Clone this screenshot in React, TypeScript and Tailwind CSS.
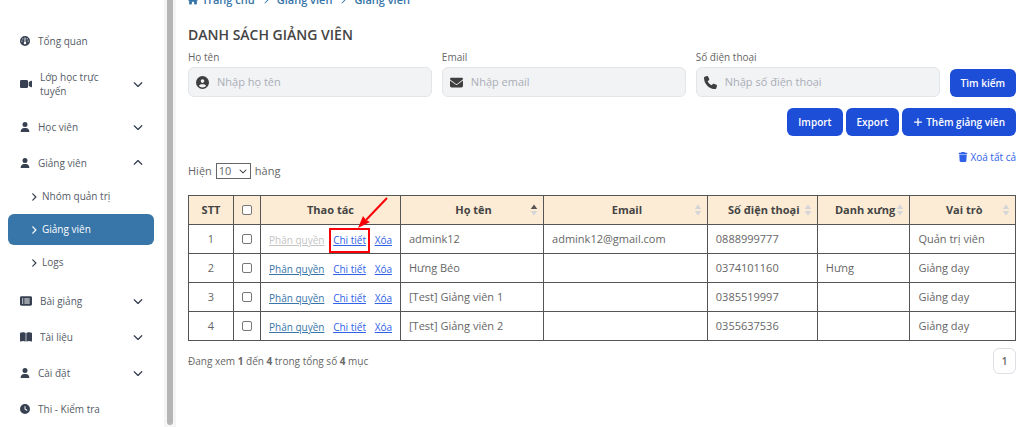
import { useState } from "react";
import type { ReactNode } from "react";
import type { IconType } from "react-icons";
import {
  FaAngleRight,
  FaBookOpen,
  FaChevronDown,
  FaChevronRight,
  FaChevronUp,
  FaCircleUser,
  FaClock,
  FaEnvelope,
  FaGauge,
  FaHouse,
  FaPhone,
  FaPlus,
  FaRectangleList,
  FaTrash,
  FaUser,
  FaVideo,
} from "react-icons/fa6";

type NavProps = { icon: IconType; label: string; wide?: boolean; state?: "open" | "closed" };

function NavItem({ icon: Icon, label, wide, state }: NavProps) {
  const body = (
    <>
      <Icon className={wide ? "size-3 shrink-0" : "size-[10px] shrink-0"} />
      <span className="w-16 text-left leading-[14px] whitespace-normal text-[#555b66]">{label}</span>
      {state === "open" && <FaChevronUp className="ml-auto size-[10px]" />}
      {state === "closed" && <FaChevronDown className="ml-auto size-[10px]" />}
    </>
  );
  return (
    <li>
      {state ? (
        <button
          type="button"
          aria-expanded={state === "open"}
          className="flex min-h-9 w-full items-center gap-2 py-[11px] pr-[21px] pl-5"
        >
          {body}
        </button>
      ) : (
        <a href="#" className="flex min-h-9 items-center gap-2 pl-5">
          {body}
        </a>
      )}
    </li>
  );
}

function SubItem({ label, active }: { label: string; active?: boolean }) {
  return (
    <li>
      <a
        href="#"
        className={
          active
            ? "flex h-[31px] items-center gap-[3px] rounded-md bg-[#3875a8] pl-[21px] text-white"
            : "flex h-[31px] items-center gap-[3px] pl-[21px] text-[#555b66]"
        }
      >
        <FaAngleRight className={active ? "size-[10px]" : "size-[10px] text-[#374151]"} />
        {label}
      </a>
    </li>
  );
}

type FieldProps = { id: string; label: string; type: string; placeholder: string; icon: IconType };

function Field({ id, label, type, placeholder, icon: Icon }: FieldProps) {
  return (
    <div className="min-w-0 flex-1">
      <label htmlFor={id} className="block text-[10px] leading-[14px] text-[#666]">
        {label}
      </label>
      <div className="mt-[3px] flex h-[30px] items-center gap-2 rounded-md border border-[#e3e5e8] bg-[#f2f3f5] px-[7px]">
        <Icon className="size-[13px] shrink-0 text-[#3f3f3f]" />
        <input
          id={id}
          type={type}
          placeholder={placeholder}
          className="w-full min-w-0 bg-transparent text-[11px] outline-none placeholder:text-[#a9adb5]"
        />
      </div>
    </div>
  );
}

function BlueButton({ children }: { children: ReactNode }) {
  return (
    <button
      type="button"
      className="flex h-7 items-center gap-[3px] rounded-md bg-[#1d4ed8] px-[11px] text-[10px] font-semibold whitespace-nowrap text-white"
    >
      {children}
    </button>
  );
}

function Check({ label }: { label: string }) {
  return (
    <input
      type="checkbox"
      aria-label={label}
      className="mx-auto block size-[10px] appearance-none rounded-[2px] border border-[#777] bg-white checked:bg-[#1d4ed8]"
    />
  );
}

function SortHead({ label, sorted }: { label: string; sorted?: boolean }) {
  return (
    <th className="border border-[#555] px-1">
      <div className="flex items-center">
        <span className="flex-1 pl-3 text-center whitespace-nowrap">{label}</span>
        <svg viewBox="0 0 8 12" className="mr-px h-3 w-2 shrink-0" aria-hidden="true">
          <path d="M4 0.5 L7.3 5 H0.7 Z" fill={sorted ? "#555" : "#d3d5d8"} />
          <path d="M4 11.5 L7.3 7 H0.7 Z" fill="#d3d5d8" />
        </svg>
      </div>
    </th>
  );
}

const teachers = [
  { name: "admink12", email: "admink12@gmail.com", phone: "0888999777", title: "", role: "Quản trị viên" },
  { name: "Hưng Béo", email: "", phone: "0374101160", title: "Hưng", role: "Giảng dạy" },
  { name: "[Test] Giảng viên 1", email: "", phone: "0385519997", title: "", role: "Giảng dạy" },
  { name: "[Test] Giảng viên 2", email: "", phone: "0355637536", title: "", role: "Giảng dạy" },
];

export default function App() {
  const [pageSize, setPageSize] = useState("10");
  return (
    <div className="flex h-screen overflow-hidden bg-white font-['Open_Sans','Noto_Sans',sans-serif] text-[11px] text-[#666]">
      <aside className="flex w-44 shrink-0">
        <nav className="min-w-0 flex-1 pt-[23px] text-[10px] text-[#374151]">
          <ul>
            <NavItem icon={FaGauge} label="Tổng quan" />
            <NavItem icon={FaVideo} label="Lớp học trực tuyến" wide state="closed" />
            <NavItem icon={FaUser} label="Học viên" state="closed" />
            <NavItem icon={FaUser} label="Giảng viên" state="open" />
            <li>
              <ul className="flex flex-col gap-[2px] pr-[10px] pb-[5px] pl-2">
                <SubItem label="Nhóm quản trị" />
                <SubItem label="Giảng viên" active />
                <SubItem label="Logs" />
              </ul>
            </li>
            <NavItem icon={FaRectangleList} label="Bài giảng" wide state="closed" />
            <NavItem icon={FaBookOpen} label="Tài liệu" wide state="closed" />
            <NavItem icon={FaUser} label="Cài đặt" state="closed" />
            <NavItem icon={FaClock} label="Thi - Kiểm tra" />
          </ul>
        </nav>
        <div className="flex w-3 shrink-0 justify-center bg-[#f5f5f5] pb-[2px]">
          <div className="w-[6px] rounded-b-full bg-[#b5b5b5]" />
        </div>
      </aside>

      <main className="min-w-0 flex-1 pr-2 pl-3">
        <nav aria-label="Breadcrumb" className="-mt-2 flex h-4 items-center gap-[7px] text-[11px] font-semibold text-[#3875a8]">
          <a href="#" className="flex items-center gap-1">
            <FaHouse className="size-[10px]" />
            Trang chủ
          </a>
          <FaChevronRight className="size-2" />
          <a href="#">Giảng viên</a>
          <FaChevronRight className="size-2" />
          <span>Giảng viên</span>
        </nav>

        <h1 className="mt-[17px] text-sm leading-5 font-semibold text-[#444]">DANH SÁCH GIẢNG VIÊN</h1>

        <form className="mt-[5px] flex items-end gap-[10px]" onSubmit={(e) => e.preventDefault()}>
          <Field id="name" label="Họ tên" type="text" placeholder="Nhập họ tên" icon={FaCircleUser} />
          <Field id="email" label="Email" type="email" placeholder="Nhập email" icon={FaEnvelope} />
          <Field id="phone" label="Số điện thoại" type="tel" placeholder="Nhập số điện thoại" icon={FaPhone} />
          <BlueButton>Tìm kiếm</BlueButton>
        </form>

        <div className="mt-[11px] flex justify-end gap-[3px]">
          <BlueButton>Import</BlueButton>
          <BlueButton>Export</BlueButton>
          <BlueButton>
            <FaPlus className="size-[10px]" />
            Thêm giảng viên
          </BlueButton>
        </div>

        <div className="mt-[13px] flex justify-end">
          <button type="button" className="flex h-4 items-center gap-[2px] text-[10px] text-[#2f62e8]">
            <FaTrash className="size-[10px]" />
            Xoá tất cả
          </button>
        </div>

        <div className="-mt-[2px] flex h-4 items-center gap-1 text-[11px]">
          <label htmlFor="page-size">Hiện</label>
          <div className="relative">
            <select
              id="page-size"
              value={pageSize}
              onChange={(e) => setPageSize(e.target.value)}
              className="block h-4 w-[35px] appearance-none border border-[#666] bg-white pl-[2px] text-[11px] leading-[14px]"
            >
              <option>10</option>
              <option>25</option>
              <option>50</option>
            </select>
            <FaChevronDown className="pointer-events-none absolute top-1 right-1 size-2 text-[#333]" />
          </div>
          <span>hàng</span>
        </div>

        <table className="mt-4 w-full table-fixed border-collapse text-[11px]">
          <colgroup>
            <col className="w-[45px]" />
            <col className="w-[27px]" />
            <col className="w-[140px]" />
            <col className="w-[17.3%]" />
            <col className="w-[19.8%]" />
            <col className="w-[13.3%]" />
            <col className="w-[11.2%]" />
            <col />
          </colgroup>
          <thead className="bg-[#fcecd5] text-[#444]">
            <tr className="h-[29px]">
              <th className="border border-[#555]">STT</th>
              <th className="border border-[#555]">
                <Check label="Chọn tất cả" />
              </th>
              <th className="border border-[#555]">Thao tác</th>
              <SortHead label="Họ tên" sorted />
              <SortHead label="Email" />
              <SortHead label="Số điện thoại" />
              <SortHead label="Danh xưng" />
              <SortHead label="Vai trò" />
            </tr>
          </thead>
          <tbody>
            {teachers.map((t, i) => (
              <tr key={t.name} className="h-[29px]">
                <td className="border border-[#555] text-center">{i + 1}</td>
                <td className="border border-[#555]">
                  <Check label={"Chọn " + t.name} />
                </td>
                <td className="border border-[#555] px-2 text-[10px]">
                  <div className="flex items-center justify-between pt-[2px] whitespace-nowrap">
                    <a href="#" className={i === 0 ? "text-[#c4c4c4] underline" : "text-[#3875a8] underline"}>
                      Phân quyền
                    </a>
                    <span className="relative">
                      <a href="#" className="text-[#2f62e8] underline">
                        Chi tiết
                      </a>
                      {i === 0 && (
                        <>
                          <span className="pointer-events-none absolute -inset-x-1 -inset-y-[5px] border-2 border-[#fb0007]" />
                          <svg
                            viewBox="0 0 32 32"
                            className="pointer-events-none absolute bottom-full left-6 mb-1 size-8"
                            aria-hidden="true"
                          >
                            <path d="M30 1 L9 23" stroke="#fb0007" strokeWidth="2" />
                            <path d="M1 31 L6 19 L9 23 L13 25 Z" fill="#fb0007" />
                          </svg>
                        </>
                      )}
                    </span>
                    <a href="#" className="text-[#2f62e8] underline">
                      Xóa
                    </a>
                  </div>
                </td>
                <td className="border border-[#555] px-2">{t.name}</td>
                <td className="border border-[#555] px-2">{t.email}</td>
                <td className="border border-[#555] px-2">{t.phone}</td>
                <td className="border border-[#555] px-2">{t.title}</td>
                <td className="border border-[#555] px-2">{t.role}</td>
              </tr>
            ))}
          </tbody>
        </table>

        <div className="mt-[7px] flex items-center justify-between text-[10px]">
          <p>
            Đang xem <b>1</b> đến <b>4</b> trong tổng số <b>4</b> mục
          </p>
          <button
            type="button"
            aria-current="page"
            className="h-[26px] w-[23px] rounded-md border border-[#dcdfe4] font-semibold"
          >
            1
          </button>
        </div>
      </main>
    </div>
  );
}
